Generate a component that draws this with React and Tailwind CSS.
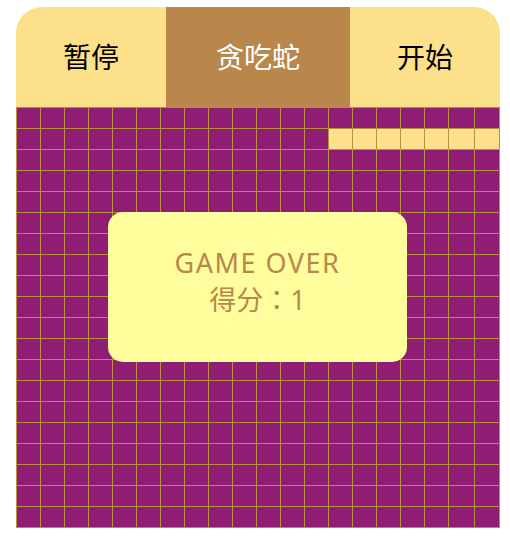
import React from 'react';

const ROWS = 20;
const COLS = 20;
const SNAKE = [13, 14, 15, 16, 17, 18, 19].map((c) => 1 * COLS + c);

export default function App() {
  const cells = Array.from({ length: ROWS * COLS }, (_, i) => i);

  return (
    <div className="min-h-screen bg-white pt-[7px] pl-4" style={{ fontFamily: '"Noto Sans", "Noto Sans CJK SC", sans-serif' }}>
      <div className="w-[484px]">
        {/* header */}
        <div className="flex h-[100px] text-[28px]">
          <button className="w-[150px] bg-[#fde18a] rounded-tl-[26px] text-black flex items-center justify-center">暂停</button>
          <div className="flex-1 bg-[#b9874c] text-white flex items-center justify-center">贪吃蛇</div>
          <button className="w-[150px] bg-[#fde18a] rounded-tr-[26px] text-black flex items-center justify-center">开始</button>
        </div>

        {/* board */}
        <div className="relative">
          <div className="grid grid-cols-[repeat(18,23px)_1fr_1fr] grid-rows-[repeat(20,20px)] gap-px p-px bg-[#b8913f]">
            {cells.map((i) => (
              <div key={i} className={SNAKE.includes(i) ? 'bg-[#fde18a]' : 'bg-[#8f1d74]'}></div>
            ))}
          </div>

          <div className="absolute left-[92px] top-[105px] w-[299px] h-[150px] rounded-[15px] bg-[#fffd9c] flex flex-col items-center justify-center pb-[12px] text-[#b9874c] text-[27px] leading-[36px]">
            <div className="tracking-[1.5px]">GAME OVER</div>
            <div>得分<span style={{ fontFamily: '"Noto Sans CJK TC", sans-serif' }}>：</span>1</div>
          </div>
        </div>
      </div>
    </div>
  );
}
